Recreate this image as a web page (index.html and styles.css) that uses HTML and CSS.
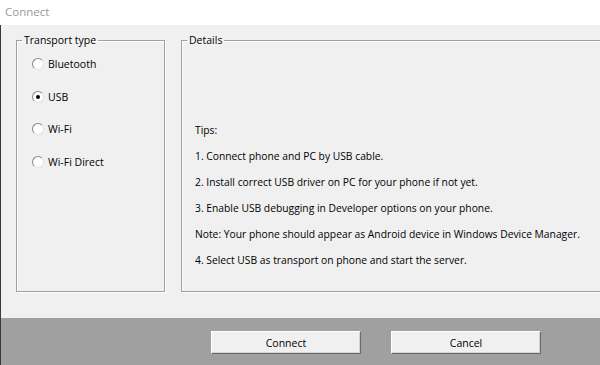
FILE: index.html
```html
<!DOCTYPE html>
<html>
<head>
<meta charset="utf-8">
<link rel="stylesheet" href="styles.css">
</head>
<body>
<div class="window">
  <div class="titlebar">Connect</div>
  <div class="main">
    <fieldset class="group transport">
      <legend>Transport type</legend>
      <div class="radios">
        <label class="radio-row"><span class="radio"></span>Bluetooth</label>
        <label class="radio-row"><span class="radio checked"></span>USB</label>
        <label class="radio-row"><span class="radio"></span>Wi-Fi</label>
        <label class="radio-row"><span class="radio"></span>Wi-Fi Direct</label>
      </div>
    </fieldset>
    <fieldset class="group details">
      <legend>Details</legend>
      <div class="tips">
        <p>Tips:</p>
        <p>1. Connect phone and PC by USB cable.</p>
        <p>2. Install correct USB driver on PC for your phone if not yet.</p>
        <p>3. Enable USB debugging in Developer options on your phone.</p>
        <p>Note: Your phone should appear as Android device in Windows Device Manager.</p>
        <p>4. Select USB as transport on phone and start the server.</p>
      </div>
    </fieldset>
  </div>
  <div class="footer">
    <button class="btn">Connect</button>
    <button class="btn">Cancel</button>
  </div>
</div>
</body>
</html>
```
FILE: styles.css
```css
* { box-sizing: border-box; }
html, body { margin: 0; padding: 0; }
body {
  width: 600px;
  height: 365px;
  overflow: hidden;
  font-family: "Open Sans", "Noto Sans", sans-serif;
  font-size: 10.5px;
  color: #000;
  background: #a0a0a0;
}
.window {
  display: flex;
  flex-direction: column;
  height: 365px;
}
.titlebar {
  height: 25px;
  line-height: 24px;
  padding-left: 5px;
  background: #fff;
  color: #999;
  font-size: 11.5px;
}
.main {
  height: 293px;
  display: flex;
  gap: 16px;
  padding: 8px 0 0 15px;
  background: #f0f0f0;
  border-left: 1px solid #3a3a3a;
  overflow: hidden;
}
.group {
  margin: 0;
  padding: 0;
  min-inline-size: 0;
  height: 259px;
  border: 1px solid #a0a0a0;
  box-shadow: 1px 1px 0 #fff, inset 1px 1px 0 #fff;
  flex: none;
}
.group legend {
  margin-left: 5px;
  padding: 0 2px;
  line-height: 14px;
}
.transport { width: 149px; }
.details { width: 440px; }
.radios {
  display: flex;
  flex-direction: column;
  gap: 16.6px;
  padding: 9px 0 0 15px;
}
.radio-row {
  display: flex;
  align-items: center;
  gap: 4px;
  height: 16px;
  line-height: 16px;
}
.radio {
  width: 12px;
  height: 12px;
  border-radius: 50%;
  background: #fff;
  border: 1px solid;
  border-color: #858585 #e2e2e2 #e2e2e2 #858585;
  display: flex;
  align-items: center;
  justify-content: center;
}
.radio.checked::after {
  content: "";
  width: 4px;
  height: 4px;
  border-radius: 50%;
  background: #000;
}
.tips {
  padding: 70px 0 0 13px;
  font-size: 10.3px;
}
.tips p {
  margin: 0;
  line-height: 26px;
  white-space: nowrap;
}
.footer {
  flex: 1;
  display: flex;
  justify-content: flex-end;
  align-items: flex-start;
  gap: 30px;
  padding: 13px 59px 0 0;
  background: #a0a0a0;
  border-left: 1px solid #3a3a3a;
}
.btn {
  width: 150px;
  height: 23px;
  padding: 0;
  font: inherit;
  color: #000;
  background: #f0f0f0;
  border: 1px solid;
  border-color: #fff #696969 #696969 #fff;
  box-shadow: inset -1px -1px 0 #d4d4d4;
}
```
